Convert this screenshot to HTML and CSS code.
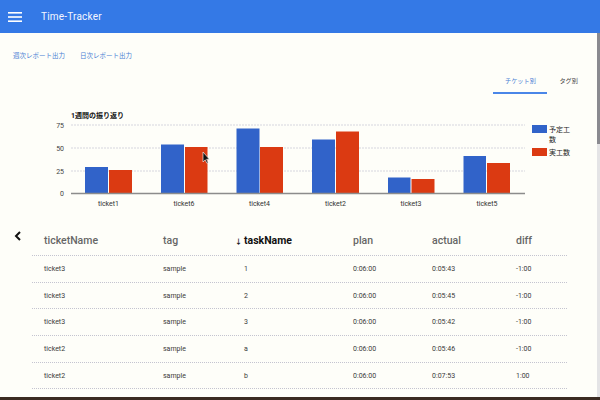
FILE: index.html
```html
<!DOCTYPE html>
<html>
<head>
    <title>Time-Tracker</title>
    <link rel="stylesheet" href="styles.css">
</head>
<body>
<div class="app">
    <header class="toolbar">
        <svg class="menuIcon" width="14" height="10" viewBox="0 0 14 10">
            <rect x="0" y="0" width="14" height="1.6" fill="#fff"/>
            <rect x="0" y="4.2" width="14" height="1.6" fill="#fff"/>
            <rect x="0" y="8.4" width="14" height="1.6" fill="#fff"/>
        </svg>
        <span class="appTitle">Time-Tracker</span>
    </header>

    <div class="main">
        <div class="content">
            <div class="reportLinks">
                <a class="reportLink">週次レポート出力</a>
                <a class="reportLink">日次レポート出力</a>
            </div>

            <div class="tabs">
                <div class="tab active">チケット別</div>
                <div class="tab">タグ別</div>
            </div>

            <svg class="chart" width="597" height="107" viewBox="0 105 597 107">
                <text class="chartTitle" x="71" y="118">1週間の振り返り</text>

                <line class="grid" x1="71" y1="125" x2="525" y2="125"/>
                <line class="grid" x1="71" y1="148" x2="525" y2="148"/>
                <line class="grid" x1="71" y1="171" x2="525" y2="171"/>

                <text class="axisLabel" x="64" y="127.5">75</text>
                <text class="axisLabel" x="64" y="150.5">50</text>
                <text class="axisLabel" x="64" y="173.5">25</text>
                <text class="axisLabel" x="64" y="196">0</text>

                <rect class="plan" x="85" y="167" width="23" height="26"/>
                <rect class="actual" x="109" y="170" width="23" height="23"/>
                <rect class="plan" x="161" y="144.5" width="23" height="48.5"/>
                <rect class="actual" x="185" y="147" width="22.5" height="46"/>
                <rect class="plan" x="236.5" y="128.5" width="23" height="64.5"/>
                <rect class="actual" x="260" y="147" width="23" height="46"/>
                <rect class="plan" x="312" y="139.5" width="23" height="53.5"/>
                <rect class="actual" x="336" y="131.5" width="23" height="61.5"/>
                <rect class="plan" x="388" y="177.5" width="22.5" height="15.5"/>
                <rect class="actual" x="411.5" y="179" width="23" height="14"/>
                <rect class="plan" x="463.5" y="156" width="22.5" height="37"/>
                <rect class="actual" x="487" y="163" width="23" height="30"/>

                <line class="baseline" x1="71" y1="193.5" x2="525" y2="193.5"/>

                <text class="xLabel" x="108.5" y="206">ticket1</text>
                <text class="xLabel" x="184" y="206">ticket6</text>
                <text class="xLabel" x="259.5" y="206">ticket4</text>
                <text class="xLabel" x="335.5" y="206">ticket2</text>
                <text class="xLabel" x="411" y="206">ticket3</text>
                <text class="xLabel" x="487" y="206">ticket5</text>

                <rect class="plan" x="532" y="125" width="15" height="8"/>
                <text class="legendText" x="549" y="131.5">予定工</text>
                <text class="legendText" x="549" y="142">数</text>
                <rect class="actual" x="532" y="148" width="15" height="8"/>
                <text class="legendText" x="549" y="154.5">実工数</text>

                <path class="cursor" d="M203 152 L203 162 L205.2 159.8 L206.8 163.2 L208.2 162.6 L206.6 159.2 L209.4 159.2 Z"/>
            </svg>

            <div class="tableArea">
                <div class="back">
                    <svg width="8" height="10" viewBox="0 0 8 10">
                        <path d="M6 1 L2 5 L6 9" fill="none" stroke="#111" stroke-width="2"/>
                    </svg>
                </div>
                <div class="taskTable">
                    <div class="row headRow">
                        <div class="cell">ticketName</div>
                        <div class="cell">tag</div>
                        <div class="cell sorted"><span class="sortArrow">↓</span>taskName</div>
                        <div class="cell">plan</div>
                        <div class="cell">actual</div>
                        <div class="cell">diff</div>
                    </div>
                    <div class="row">
                        <div class="cell">ticket3</div>
                        <div class="cell">sample</div>
                        <div class="cell task">1</div>
                        <div class="cell">0:06:00</div>
                        <div class="cell">0:05:43</div>
                        <div class="cell">-1:00</div>
                    </div>
                    <div class="row">
                        <div class="cell">ticket3</div>
                        <div class="cell">sample</div>
                        <div class="cell task">2</div>
                        <div class="cell">0:06:00</div>
                        <div class="cell">0:05:45</div>
                        <div class="cell">-1:00</div>
                    </div>
                    <div class="row">
                        <div class="cell">ticket3</div>
                        <div class="cell">sample</div>
                        <div class="cell task">3</div>
                        <div class="cell">0:06:00</div>
                        <div class="cell">0:05:42</div>
                        <div class="cell">-1:00</div>
                    </div>
                    <div class="row">
                        <div class="cell">ticket2</div>
                        <div class="cell">sample</div>
                        <div class="cell task">a</div>
                        <div class="cell">0:06:00</div>
                        <div class="cell">0:05:46</div>
                        <div class="cell">-1:00</div>
                    </div>
                    <div class="row">
                        <div class="cell">ticket2</div>
                        <div class="cell">sample</div>
                        <div class="cell task">b</div>
                        <div class="cell">0:06:00</div>
                        <div class="cell">0:07:53</div>
                        <div class="cell">1:00</div>
                    </div>
                </div>
            </div>
        </div>
        <div class="scrollbar">
            <div class="scrollThumb"></div>
        </div>
    </div>
    <div class="bottomStrip"></div>
</div>
</body>
</html>
```

FILE: styles.css
```css
body {
    margin: 0;
    font-family: Roboto, "Noto Sans CJK JP", sans-serif;
    background-color: #fefef9;
}

.app {
    width: 600px;
    height: 400px;
    display: flex;
    flex-direction: column;
    overflow: hidden;
}

.toolbar {
    height: 33px;
    flex-shrink: 0;
    background-color: #3479e6;
    display: flex;
    align-items: center;
    padding-left: 8px;
}

.menuIcon {
    display: block;
}

.appTitle {
    margin-left: 19px;
    color: #f4f7ff;
    font-size: 10px;
    letter-spacing: 0.2px;
}

.main {
    flex: 1;
    display: flex;
    min-height: 0;
}

.content {
    flex: 1;
    overflow: hidden;
}

.scrollbar {
    width: 3px;
    background-color: #e4e4e6;
}

.scrollThumb {
    height: 111px;
    background-color: #8a8a90;
}

.bottomStrip {
    height: 3px;
    flex-shrink: 0;
    background-color: #3b2c22;
}

.reportLinks {
    display: flex;
    gap: 15px;
    margin-top: 17px;
    padding-left: 13px;
    height: 10px;
    align-items: center;
}

.reportLink {
    color: #4a7ed4;
    font-size: 6.5px;
    cursor: pointer;
}

.tabs {
    display: flex;
    justify-content: flex-end;
    padding-right: 7px;
    margin-top: 6px;
}

.tab {
    height: 28px;
    padding: 0 12px;
    display: flex;
    align-items: center;
    justify-content: center;
    font-size: 6.2px;
    color: #444;
    white-space: nowrap;
    box-sizing: border-box;
}

.tab.active {
    width: 54px;
    padding: 2px 0 0;
    color: #4a7ed4;
    border-bottom: 2px solid #4a86e8;
}

.chart {
    display: block;
    margin-top: 11px;
}

.chartTitle {
    font-size: 7px;
    font-weight: bold;
    fill: #111;
}

.grid {
    stroke: #d6d6de;
    stroke-width: 1;
    stroke-dasharray: 2 1;
}

.baseline {
    stroke: #8c8c8c;
    stroke-width: 1.5;
}

.axisLabel {
    font-size: 7px;
    fill: #444;
    text-anchor: end;
}

.xLabel {
    font-size: 7px;
    fill: #333;
    text-anchor: middle;
}

.legendText {
    font-size: 7px;
    fill: #222;
}

.plan {
    fill: #3163c9;
}

.actual {
    fill: #db3a12;
}

.cursor {
    fill: #111;
    stroke: #fff;
    stroke-width: 0.6;
}

.tableArea {
    display: flex;
    margin-top: 14px;
}

.back {
    width: 32px;
    padding-top: 5px;
    padding-left: 14px;
    box-sizing: border-box;
}

.back svg {
    display: block;
}

.taskTable {
    width: 535px;
}

.row {
    display: grid;
    grid-template-columns: 119px 72px 118px 79px 84px 1fr;
    height: 26.7px;
    align-items: center;
    border-bottom: 1px dotted #c4c4d0;
    box-sizing: border-box;
    font-size: 7px;
    color: #3a3a3a;
}

.cell {
    padding-left: 12px;
    white-space: nowrap;
}

.cell.task {
    padding-left: 21px;
}

.headRow {
    height: 30px;
    font-size: 10.5px;
    font-weight: 500;
    color: #666;
}

.headRow .sorted {
    color: #111;
    font-weight: bold;
}

.sortArrow {
    font-size: 7px;
    margin-right: 2px;
}
```
